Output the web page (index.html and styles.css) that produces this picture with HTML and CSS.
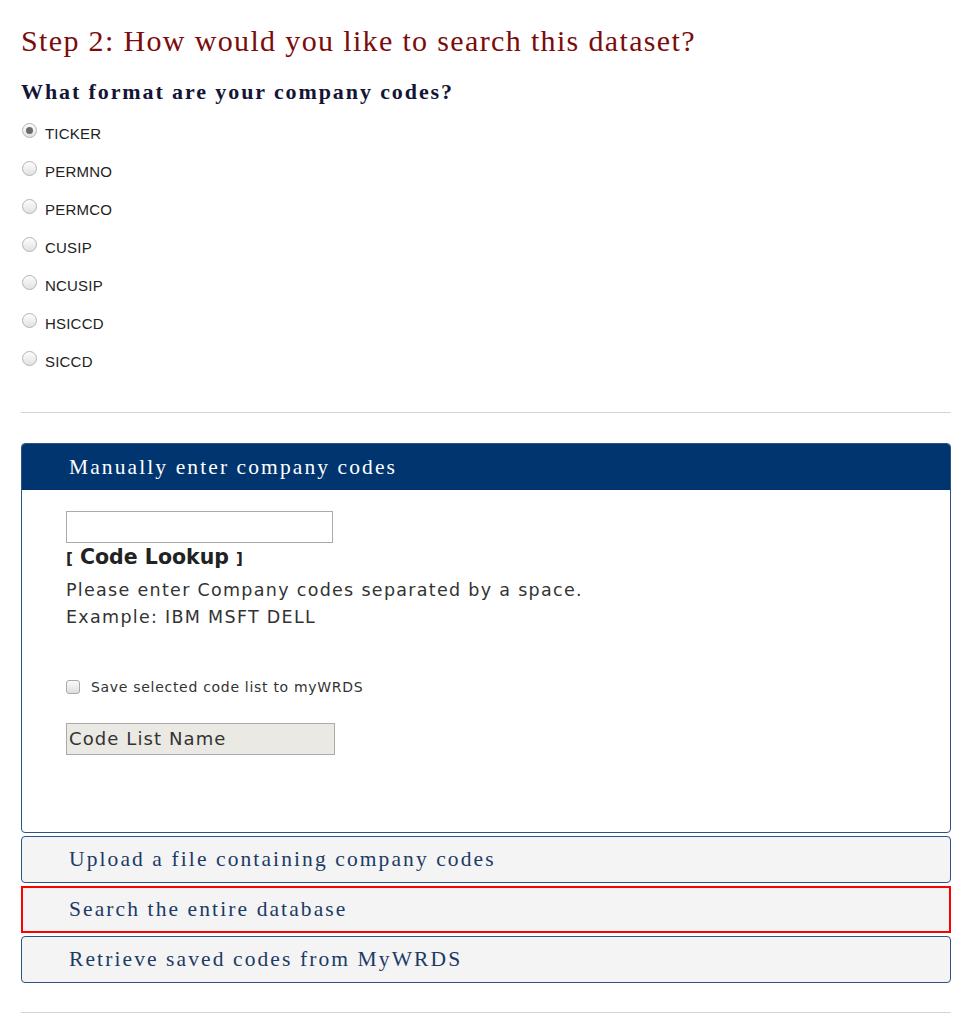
FILE: index.html
```html
<!DOCTYPE html>
<html>
<head>
<meta charset="utf-8">
<link rel="stylesheet" href="styles.css">
</head>
<body>
<div class="page">
  <h1 class="step-title">Step 2: How would you like to search this dataset?</h1>
  <h2 class="sub-title">What format are your company codes?</h2>
  <div class="radio-list">
    <label class="radio-row"><span class="radio checked"></span>TICKER</label>
    <label class="radio-row"><span class="radio"></span>PERMNO</label>
    <label class="radio-row"><span class="radio"></span>PERMCO</label>
    <label class="radio-row"><span class="radio"></span>CUSIP</label>
    <label class="radio-row"><span class="radio"></span>NCUSIP</label>
    <label class="radio-row"><span class="radio"></span>HSICCD</label>
    <label class="radio-row"><span class="radio"></span>SICCD</label>
  </div>
  <hr class="divider first">
  <div class="accordion">
    <div class="panel open">
      <div class="panel-head">Manually enter company codes</div>
      <div class="panel-body">
        <div class="text-input"></div>
        <div class="lookup"><span class="br">[</span> Code Lookup <span class="br">]</span></div>
        <p class="hint">Please enter Company codes separated by a space.<br>Example: IBM MSFT DELL</p>
        <label class="check-row"><span class="checkbox"></span>Save selected code list to myWRDS</label>
        <div class="name-input">Code List Name</div>
      </div>
    </div>
    <div class="panel closed"><div class="panel-head">Upload a file containing company codes</div></div>
    <div class="panel closed marked"><div class="panel-head">Search the entire database</div></div>
    <div class="panel closed"><div class="panel-head">Retrieve saved codes from MyWRDS</div></div>
  </div>
  <hr class="divider last">
</div>
</body>
</html>
```
FILE: styles.css
```css
html, body { margin: 0; padding: 0; background: #fff; }
.page { width: 930px; padding: 24px 0 0 21px; }
.step-title {
  margin: 0;
  font-family: "Liberation Serif", serif;
  font-weight: normal;
  font-size: 30px;
  line-height: 34px;
  letter-spacing: 1.35px;
  color: #7b0c0c;
}
.sub-title {
  margin: 21px 0 0 0;
  font-family: "Liberation Serif", serif;
  font-weight: bold;
  font-size: 22px;
  line-height: 26px;
  letter-spacing: 1.9px;
  color: #141436;
}
.radio-list { display: flex; flex-direction: column; margin-top: 9px; }
.radio-row {
  display: flex; align-items: center;
  height: 38px;
  font-family: "Liberation Sans", sans-serif;
  font-size: 15px;
  letter-spacing: 0.2px;
  color: #222;
}
.radio {
  width: 13px; height: 13px;
  border-radius: 50%;
  border: 1px solid #b4b4b4;
  background: linear-gradient(#fdfdfd, #e2e2e2);
  margin: -6px 8px 0 1px;
  box-sizing: content-box;
  position: relative;
}
.radio.checked::after {
  content: ""; position: absolute; left: 3px; top: 3px;
  width: 7px; height: 7px; border-radius: 50%;
  background: #6a6a6a;
}
.divider { border: 0; border-top: 1px solid #d4d4d4; margin: 0; }
.divider.first { margin-top: 32px; }
.accordion { display: flex; flex-direction: column; gap: 3px; margin-top: 30px; }
.panel {
  border: 1px solid #2c5287;
  border-radius: 4px;
  background: #f4f4f4;
  overflow: hidden;
}
.panel-head {
  font-family: "Liberation Serif", serif;
  font-size: 21.5px;
  letter-spacing: 2.1px;
  height: 45px;
  line-height: 45px;
  padding-left: 47px;
  color: #1c3a66;
}
.panel.open { background: #fff; }
.panel.open .panel-head {
  background: #003570;
  color: #fff;
  height: 46px;
  line-height: 46px;
}
.panel-body { padding: 21px 44px 0; height: 321px; }
.text-input {
  width: 265px; height: 30px;
  border: 1px solid #aaa;
  background: #fff;
}
.lookup {
  margin-top: 1px;
  font-family: "DejaVu Sans", sans-serif;
  font-weight: bold;
  font-size: 20.5px;
  line-height: 26px;
  color: #222;
}
.lookup .br { font-size: 15px; }
.hint {
  margin: 5px 0 0 0;
  font-family: "DejaVu Sans", sans-serif;
  font-size: 17.5px;
  letter-spacing: 1.3px;
  line-height: 27px;
  color: #333;
}
.check-row {
  display: flex; align-items: center;
  margin-top: 48px;
  font-family: "DejaVu Sans", sans-serif;
  font-size: 14px;
  letter-spacing: 0.7px;
  color: #333;
}
.checkbox {
  width: 12px; height: 12px;
  border: 1px solid #aaa;
  border-radius: 3px;
  background: linear-gradient(#fafafa, #dedede);
  margin-right: 11px;
}
.name-input {
  margin-top: 28px;
  width: 269px; height: 32px;
  border: 1px solid #aaa;
  background: #ebe9e3;
  box-sizing: border-box;
  padding-left: 2px;
  font-family: "DejaVu Sans", sans-serif;
  font-size: 18px;
  letter-spacing: 1.1px;
  line-height: 30px;
  color: #333;
}
.panel.marked {
  border: 2px solid #f00;
  border-radius: 0;
}
.panel.marked .panel-head { height: 43px; line-height: 43px; padding-left: 46px; }
.divider.last { margin-top: 29px; }
```
